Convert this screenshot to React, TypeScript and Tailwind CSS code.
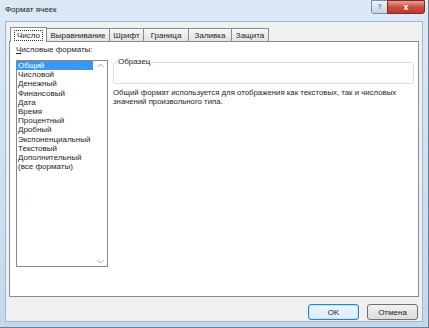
import React from 'react';

const tabs = ['Число', 'Выравнивание', 'Шрифт', 'Граница', 'Заливка', 'Защита'];
const tabWidths = ['w-[37px]', 'w-[64px]', 'w-[35px]', 'w-[46px]', 'w-[44px]', 'w-[38px]'];

const formats = [
  'Общий',
  'Числовой',
  'Денежный',
  'Финансовый',
  'Дата',
  'Время',
  'Процентный',
  'Дробный',
  'Экспоненциальный',
  'Текстовый',
  'Дополнительный',
  '(все форматы)',
];

const App: React.FC = () => {
  return (
    <div
      className="w-[429px] h-[328px] flex flex-col bg-gradient-to-b from-[#dce9f7] to-[#c3d8ef] border-r border-b border-[#6d7f95] text-[#1e1e1e] text-[8px] overflow-hidden"
      style={{ fontFamily: '"Liberation Sans", Arial, sans-serif' }}
    >
      {/* заголовок */}
      <div className="h-[21px] flex items-start justify-between shrink-0">
        <span className="pl-[5px] pt-[5px] text-[8px] leading-[10px] text-[#222]">Формат ячеек</span>
        <div className="flex mr-[3px]">
          <div className="w-[17px] h-[14px] rounded-bl-[3px] border border-[#7b8ea8] bg-gradient-to-b from-[#eef3f9] to-[#c6d3e3] flex items-center justify-center text-[8px] leading-none text-[#3d4b5e]">
            ?
          </div>
          <div className="w-[38px] h-[14px] -ml-px rounded-br-[3px] border border-[#7c2a22] bg-gradient-to-b from-[#e8a093] via-[#c94f3f] to-[#c1372a] flex items-center justify-center text-[9px] leading-none font-bold text-white">
            x
          </div>
        </div>
      </div>

      {/* клиентская область */}
      <div className="flex-1 mx-[5px] mb-[5px] bg-[#f0f0f0] border border-[#a5b6cb] flex flex-col px-[3px] pt-[4px]">
        {/* вкладки */}
        <div className="flex items-end h-[15px] pl-px">
          {tabs.map((t, i) =>
            i === 0 ? (
              <div
                key={t}
                className={`${tabWidths[i]} h-[15px] -mb-px z-10 bg-white border border-b-0 border-[#898c95] flex items-center justify-center`}
              >
                <span className="border border-dotted border-[#333] px-[2px] leading-[9px]">{t}</span>
              </div>
            ) : (
              <div
                key={t}
                className={`${tabWidths[i]} h-[13px] -ml-px border border-b-0 border-[#898c95] bg-gradient-to-b from-[#f7f7f7] to-[#e3e3e3] flex items-center justify-center leading-[9px]`}
              >
                {t}
              </div>
            )
          )}
        </div>

        {/* панель */}
        <div className="h-[256px] bg-white border border-[#898c95] flex gap-[5px] pl-[6px] pr-[4px]">
          <div className="w-[92px] flex flex-col pt-[3px]">
            <div className="leading-[10px] h-[15px]">
              <span className="underline">Ч</span>исловые форматы:
            </div>
            <div className="h-[207px] border border-[#828790] flex">
              <div className="flex-1 flex flex-col">
                {formats.map((f, i) => (
                  <div
                    key={f}
                    className={`h-[9.2px] leading-[9.2px] pl-px whitespace-nowrap ${i === 0 ? 'bg-[#3399ff] text-white' : ''}`}
                  >
                    {f}
                  </div>
                ))}
              </div>
              <div className="w-[14px] flex flex-col items-center justify-between py-[2px]">
                <svg width="7" height="5" viewBox="0 0 7 5">
                  <path d="M0.5 4 L3.5 1 L6.5 4" fill="none" stroke="#a0a0a0" strokeWidth="1" />
                </svg>
                <svg width="7" height="5" viewBox="0 0 7 5">
                  <path d="M0.5 1 L3.5 4 L6.5 1" fill="none" stroke="#a0a0a0" strokeWidth="1" />
                </svg>
              </div>
            </div>
          </div>

          <div className="flex-1 flex flex-col pt-[20px]">
            <div className="relative h-[22px] border border-[#d5dfe5] rounded-[3px]">
              <span className="absolute -top-[6px] left-[3px] bg-white px-px leading-[10px]">Образец</span>
            </div>
            <div className="mt-[4px] leading-[9px] text-[7.8px]">
              Общий формат используется для отображения как текстовых, так и числовых значений произвольного
              типа.
            </div>
          </div>
        </div>

        {/* кнопки */}
        <div className="flex justify-end gap-[8px] mt-[7px] pr-[1px]">
          <div className="w-[51px] h-[16px] rounded-[3px] border border-[#3c7fb1] bg-gradient-to-b from-[#eaf6fd] to-[#d9eefc] shadow-[inset_0_0_0_1px_#b9e2f9] flex items-center justify-center leading-[9px]">
            OK
          </div>
          <div className="w-[51px] h-[16px] rounded-[3px] border border-[#707070] bg-gradient-to-b from-[#f2f2f2] to-[#dddddd] flex items-center justify-center leading-[9px]">
            Отмена
          </div>
        </div>
      </div>
    </div>
  );
};

export default App;
